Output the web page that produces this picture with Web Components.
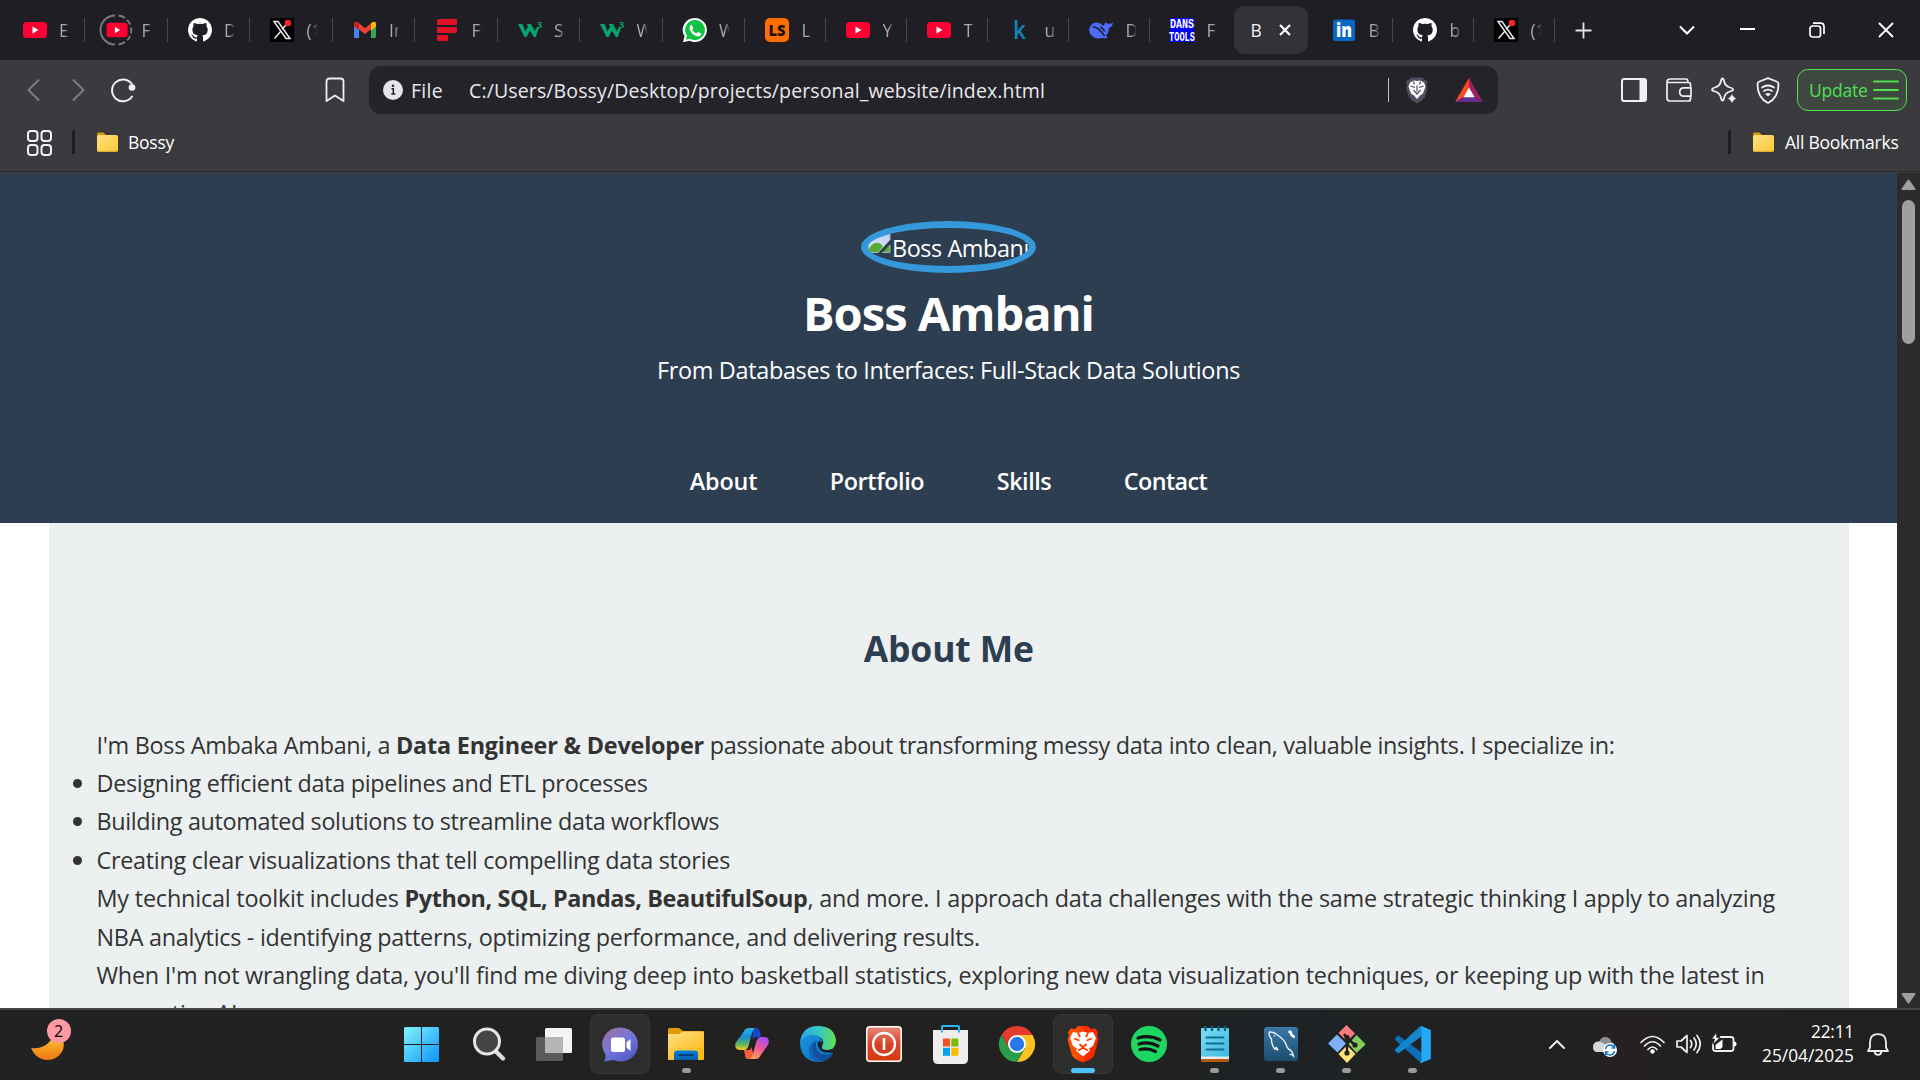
<!DOCTYPE html>
<html lang="en"><head><meta charset="utf-8"><title>Boss Ambani</title>
<style>
html,body{margin:0;width:1920px;height:1080px;overflow:hidden;background:#fff}
body{font-family:"Open Sans","Noto Sans","Liberation Sans",sans-serif}
</style></head><body>
<desktop-screen></desktop-screen>
<script>
const yt='<rect width="24" height="16" y="4" rx="3.500" fill="#ff0033"/><path d="M9.500 8.500v7l6-3.500z" fill="#fff"/>';
const gh='<path fill="#fff" d="M12 0A12 12 0 0 0 8.200 23.400c.6.100.8-.3.8-.6v-2.200c-3.300.7-4-1.400-4-1.400-.6-1.400-1.300-1.800-1.300-1.800-1.100-.7.100-.7.100-.7 1.200.1 1.800 1.200 1.800 1.200 1.100 1.800 2.800 1.300 3.500 1 .1-.8.4-1.300.8-1.600-2.700-.3-5.500-1.300-5.500-6 0-1.200.5-2.300 1.300-3.200-.2-.4-.6-1.600.1-3.200 0 0 1-.3 3.300 1.200a11.500 11.500 0 0 1 6 0C17.300 4.600 18.300 5 18.300 5c.7 1.600.2 2.800.1 3.200.8.900 1.300 2 1.300 3.200 0 4.700-2.800 5.700-5.500 6 .4.400.8 1.100.8 2.200v3.200c0 .3.2.7.8.6A12 12 0 0 0 12 0z"/>';
const xx='<rect width="24" height="24" fill="#000"/><path d="M4 3.500h4L20 20.500h-4zM19 3.500l-7 8M4.500 20.500l6.500-7.500" fill="none" stroke="#e8e8e8" stroke-width="1.500"/><circle cx="18" cy="5" r="3.300" fill="#f4212e"/>';
const w3='<path d="M0 6h4.500l3 7.500L10 8.500 8.800 6H13l4 7.500 1.500-4h2.500L17.800 19h-2L12 12.500 8.500 19h-2z" fill="#04a46a"/><text x="19" y="10" font-size="9" font-weight="700" fill="#04a46a">3</text>';
const folder='<path d="M1 2q0-1.500 1.500-1.500h5L10 3v16H1z" fill="#d99a12"/><rect x="1" y="3" width="21" height="17" rx="2" fill="url(#f)"/><path d="M1.500 19.300h20" stroke="#d9a733"/><defs><linearGradient id="f" x2="1" y2="1"><stop stop-color="#ffe082"/><stop offset="1" stop-color="#ffc933"/></linearGradient></defs>';
const S='fill="none" stroke="#f0f0f2" stroke-linecap="round" stroke-linejoin="round"';
const ICONS={
yt:[24,24,yt],
ytring:[24,24,'<g transform="translate(1.500 1.200) scale(.88 .9)">'+yt+'</g><path d="M10 -2.500A14.500 14.500 0 0 0 10 26.500M13.500 -2.500q3.500.3 6.500 2.500M22 2q2 2 3.200 4.500M26 9.500q.8 3 0 6M25.200 18q-1 2.500-3 4.300M20 24q-3 2.200-6.500 2.500" fill="none" stroke="#7b7b80" stroke-width="1.900"/>'],
gh:[24,24,gh],x:[24,24,xx],w3:[24,24,w3],
gmail:[24,24,'<path d="M1 6h5v14H2.500Q1 20 1 18.500z" fill="#4285f4"/><path d="M18 6h5v12.500q0 1.500-1.500 1.500H18z" fill="#34a853"/><path d="M1 5.500Q1 4 2.500 4L5 4.500l7 5.700 7-5.700v6L12 16 1 8z" fill="#ea4335"/><path d="M18 5.200Q23 2 23 6v2.500l-5 4z" fill="#fbbc04"/><path d="M1 6q0-2 2-2l3 2v6L1 8.500z" fill="#c5221f"/>'],
freq:[24,24,'<path d="M3.500 1H22v4.500q0 1.500-1.500 1.500h-17Q2 7 2 5.500V2.500Q2 1 3.500 1zM2 9h20v4.500q0 1.500-1.500 1.500h-17Q2 15 2 13.500zM2 17h11v4.500q0 1.500-1.500 1.500h-8Q2 23 2 21.500z" fill="#e01226"/>'],
wa:[24,24,'<path d="M12 0a12 12 0 1 1-5.500 22.700L0 24.300l1.500-6A12 12 0 0 1 12 0z" fill="#f4fff4"/><path d="M12 2a10 10 0 1 1-5 18.700L3 21.800l1-4A10 10 0 0 1 12 2z" fill="#10c344"/><path d="M8.500 6.500l1.800 3.800-1.200 1.500q1.500 2.700 4.300 3.800l1.500-1.700 3.300 1.600q.1 2.900-3.300 2.900Q8 17 6.500 10.500q0-2.800 2-4z" fill="#fff"/>'],
ls:[24,24,'<rect width="24" height="24" rx="5" fill="#ff6d00"/><text x="12" y="17.500" font-size="15" font-weight="800" text-anchor="middle" textLength="17" lengthAdjust="spacingAndGlyphs" fill="#1a1108">LS</text>'],
kg:[24,24,'<text x="5" y="21" font-size="26" font-weight="600" textLength="13" lengthAdjust="spacingAndGlyphs" fill="#0b87b8">k</text>'],
ds:[24,24,'<path d="M0 12Q1 5 7 4.500q4-.3 6.500 3Q16 8 16 4q2 2.500 4 1.500 2.500.5 4-1-.3 4-4 5.500 0 4.500-3 8 1 1.500 2.500 1-2.500 2-5.500 1Q2 22.500 0 12z" fill="#4d6bfe"/><path d="M3.500 9q4-.5 8 4t4 5M11 9.500q3 0 4.500 4" fill="none" stroke="#1f1e24" stroke-width="1.600"/>'],
dans:[24,24,'<rect width="24" height="24" fill="#0000f5"/><g font-family="Liberation Mono,monospace" font-size="12.500" font-weight="700" fill="#fff"><text x="0" y="9.500" textLength="24" lengthAdjust="spacingAndGlyphs">DANS</text><text x="-1" y="23" textLength="26" lengthAdjust="spacingAndGlyphs">TOOLS</text></g>'],
li:[24,24,'<rect x="1" y="1.500" width="22" height="21.500" rx="2" fill="#0a66c2"/><text x="12" y="19" font-size="19" font-weight="800" text-anchor="middle" textLength="16" lengthAdjust="spacingAndGlyphs" fill="#fff">in</text>'],
close:[14,14,'<path d="M2 2l10 10M12 2L2 12" stroke="#fff" stroke-width="2.200" fill="none"/>'],
plus:[17,17,'<path d="M8.500 .5v16M.5 8.500h16" stroke="#e4e4e6" stroke-width="1.800"/>'],
down:[16,10,'<path d="M1 1.500l7 7 7-7" stroke="#fff" stroke-width="2.100" fill="none"/>'],
min:[15,4,'<path d="M0 1h15" stroke="#fff" stroke-width="2"/>'],
restore:[16,16,'<rect x="1" y="4" width="10.500" height="11" rx="2.500" fill="none" stroke="#fff" stroke-width="1.700"/><path d="M4 1.200h7.500q3.500 0 3.500 3.500V12" fill="none" stroke="#fff" stroke-width="1.700"/>'],
wclose:[16,16,'<path d="M1 1l14 14M15 1L1 15" stroke="#fff" stroke-width="1.800"/>'],
back:[13,24,'<path d="M12 1.500L1.500 12 12 22.500" fill="none" stroke="#7f7e83" stroke-width="1.900"/>'],
fwd:[13,24,'<path d="M1 1.500L11.500 12 1 22.500" fill="none" stroke="#7f7e83" stroke-width="1.900"/>'],
reload:[26,24,'<path d="M21.800 6A10.900 10.900 0 1 0 22 18.500" fill="none" stroke="#f0f0f2" stroke-width="2" stroke-linecap="round"/><circle cx="22" cy="9.500" r="3.300" fill="#f0f0f2"/>'],
mark:[20,26,'<path d="M1.500 24V4.500q0-3 3-3h11q3 0 3 3V24L10 18.500z" '+S+' stroke-width="1.800"/>'],
info:[20,20,'<circle cx="10" cy="10" r="10" fill="#e6e5ea"/><path d="M8.500 8.700h1.800V14M8.300 14h4" fill="none" stroke="#242329" stroke-width="1.500"/><circle cx="10" cy="5.700" r="1.200" fill="#242329"/>'],
shield:[24,27,'<path d="M6 .5h11l3 2.500 2.500 1-1 4 1 3-2.500 9q-1 2-8 6.500-7-4.500-8-6.500L1 11l1-3L1 4l2.500-1z" fill="#4e4d61"/><path d="M5 5.500l4-2 3 .5 3-.5 4 2 1.500 4-2.500 7-3 2-3 3.500L9 18.500l-3-2-2.500-7z" fill="#fff"/><path d="M5.500 9l4.500 1.500M18.500 9L14 10.500M12 8.500v6M8.500 13l3.500 4 3.500-4M8.500 4.500l1 3M15.500 4.500l-1 3" fill="none" stroke="#4e4d61" stroke-width="1.200"/>'],
bat:[28,24,'<path d="M14 0L0 24l8.500-5L14 9.500z" fill="#ff4724"/><path d="M14 0l14 24-8.500-5L14 9.500z" fill="#9e1f63"/><path d="M0 24l8.500-5h11l8.500 5z" fill="#662d91"/><path d="M14 9.500L8.300 19.200h11.400z" fill="#fff"/>'],
side:[26,24,'<rect x="1" y="1" width="24" height="22" rx="2" '+S+' stroke-width="2"/><path d="M18.500 1H25v22h-6.500z" fill="#f0f0f2"/>'],
wallet:[26,24,'<path d="M24.500 10V6.500q0-2-2-2H1V20q0 3 3 3h18.500q2 0 2-2v-2.500M1 4.500q0-3.500 3-3.500h16q2 0 2 3.500" '+S+' stroke-width="1.700"/><path d="M25 9.800h-7q-4.300 0-4.300 4.200t4.300 4.200h7z" '+S+' stroke-width="1.700"/>'],
leo:[27,27,'<path d="M11.500 1.500q1 0 1.500 2.500 1 5 6 6.500 3 .8 3 2t-3 2q-5 1.500-6 6.500-.5 2.500-1.500 2.500T10 21q-1-5-6-6.500-3-.8-3-2t3-2Q9 9 10 4q.5-2.500 1.500-2.500z" '+S+' stroke-width="1.800"/><path d="M21 15q1 6 6 6.500-5 .5-6 6.500-1-6-6-6.500 5-.5 6-6.500z" fill="#f0f0f2" stroke="#3b3a3f"/>'],
vpn:[24,27,'<path d="M12 1.200l8.500 3.300q2 .8 2 2.500 0 14-10.500 19Q1.500 21 1.500 7q0-1.700 2-2.500z" '+S+' stroke-width="1.800"/><path d="M6 10.500q6-4 12 0M8 14q4-2.800 8 0" '+S+' stroke-width="1.800"/><path d="M9 17q3-2 6 0l-3 2.500z" fill="#f0f0f2"/>'],
burger:[26,20,'<path d="M1 1.500h24M1 10h24M1 18.500h24" stroke="#4fe04f" stroke-width="1.900" stroke-linecap="round"/>'],
apps:[25,26,'<g '+S+' stroke-width="2"><rect x="1" y="1" width="9.500" height="10" rx="3"/><rect x="14.500" y="1" width="9.500" height="10" rx="3"/><rect x="1" y="15" width="9.500" height="10" rx="3"/><rect x="14.500" y="15" width="9.500" height="10" rx="3"/></g>'],
folder:[23,21,folder],
broken:[24,20,'<defs><linearGradient id="g" x2="0" y2="1"><stop stop-color="#bcd0f5"/><stop offset="1" stop-color="#dfe9fa"/></linearGradient></defs><path d="M0 0h22v7L10 20H0z" fill="url(#g)"/><path d="M0 18q2-6 7-8 5-1 8 3.500L9.500 20H0z" fill="#55ad33"/><path d="M22 11.500V20h-8z" fill="#55ad33"/><path d="M.5 20V.5h21.500V7M0 19.500h10M22 12v7.500h-8" fill="none" stroke="#a9b2bd"/>'],
win:[35,35,'<defs><linearGradient id="g" x2="1" y2="1" gradientUnits="userSpaceOnUse" gradientTransform="scale(35)"><stop stop-color="#83f2ff"/><stop offset="1" stop-color="#0a96f8"/></linearGradient></defs><path d="M1.500 0H17v17H0V1.500Q0 0 1.500 0zM18 0h15.500Q35 0 35 1.500V17H18zM0 18h17v17H1.500Q0 35 0 33.500zM18 18h17v15.500q0 1.500-1.500 1.500H18z" fill="url(#g)"/>'],
search:[36,36,'<g transform="translate(1.500 0)"><path d="M24 25l7.500 7.500" stroke="#d9dcdf" stroke-width="4.400" stroke-linecap="round"/><circle cx="15.500" cy="15.500" r="12.500" fill="#454545" stroke="#e4e6e8" stroke-width="3"/></g>'],
task:[36,35,'<rect x="9" y="1" width="27" height="25" rx="1.500" fill="#f4f4f4"/><rect y="10" width="27" height="24" rx="1.500" fill="#5b5b5b"/><path d="M9 10h18v16H9z" fill="#b5b5b5"/>'],
chat:[35,35,'<defs><linearGradient id="g" x1=".1" x2=".8" y2="1"><stop stop-color="#a06fa5"/><stop offset=".5" stop-color="#7277d9"/><stop offset="1" stop-color="#5257c4"/></linearGradient></defs><path d="M18 .5a17 17 0 1 1-7 32.500L1 34.500q2-3 1.500-7A17 17 0 0 1 18 .5z" fill="url(#g)"/><rect x="8" y="10.500" width="14" height="14.500" rx="2.500" fill="#fff"/><path d="M23.500 15.500l4-3.500v12l-4-3.500z" fill="#fff"/>'],
explorer:[36,34,'<defs><linearGradient id="g" x2=".7" y2="1"><stop stop-color="#ffe083"/><stop offset="1" stop-color="#fdb914"/></linearGradient><linearGradient id="h" x2="0" y2="1"><stop stop-color="#0a80d8"/><stop offset="1" stop-color="#0560ac"/></linearGradient></defs><path d="M0 2.500Q0 1 1.500 1H11l4 3h19.500Q36 4 36 6v3H0z" fill="#e09b06"/><path d="M0 7h11l4-2.500h21V32q0 1-1 1H1q-1 0-1-1z" fill="url(#g)"/><path d="M6 33v-6.500q0-3 3-3h18q3 0 3 3V33z" fill="url(#h)"/><path d="M11 28h14" stroke="#063f7c" stroke-width="1.800" stroke-linecap="round"/>'],
copilot:[34,32,'<defs><linearGradient id="g" x2="0" y2="1"><stop stop-color="#2bb6f5"/><stop offset=".4" stop-color="#128ed2"/><stop offset=".75" stop-color="#63b75b"/><stop offset="1" stop-color="#ffcb1a"/></linearGradient><linearGradient id="h" x1=".6" x2=".3" y2="1"><stop stop-color="#a44df0"/><stop offset=".5" stop-color="#f0559b"/><stop offset="1" stop-color="#ffa05a"/></linearGradient></defs><path d="M18 0h3q3 0 4 4l1 5h-5q-2.500 0-3.500 3z" fill="#1746c9"/><path d="M8.500 4Q10 0 14 0h6q-2 1-3 5l-3 11.500Q12.500 22 9 22H5q-6 0-4.500-7z" fill="url(#g)"/><path d="M9 22h4q3 0 3.500-3l2 8q-1 4-2.500 4h-3q-3 0-3-4z" fill="#f4603a"/><path d="M25.500 27.500Q24 31 20 31h-5q2-1 3-5l3-11.500Q22.500 9 26 9h3q6 0 4.500 7z" fill="url(#h)"/>'],
edge:[36,36,'<defs><linearGradient id="g"><stop stop-color="#2aa9e6"/><stop offset=".55" stop-color="#36c8c0"/><stop offset="1" stop-color="#67e04d"/></linearGradient><linearGradient id="h" x2="1" y2="1"><stop stop-color="#1b94e0"/><stop offset="1" stop-color="#0b6cc4"/></linearGradient></defs><path d="M0 17Q1 8 10 8q9 0 12 7l-2 8 13 4.500Q28 36 18 36 1 35 0 17z" fill="url(#h)"/><path d="M0 16Q2 0 18 0t18 14q0 10-9 10-7 0-5-4 3-4-1-8-8-6-16-1-4 2-5 5z" fill="url(#g)"/><path d="M17 14q-5 4-4.500 10 1.500 9 10.500 11.300-3 1-6 .3-7-3-8-10.600Q9 17 17 14z" fill="#0f62b4"/><path d="M17 14q-5 4-4.500 10 1.500 9 10.500 11.300 7-2 10-7.800-1-.5-2 .2-7 2.800-12-1.200-5-5-2-12.500z" fill="#12509c"/><path d="M19.500 14.500q-3 3-1.300 6.500 2.300 5 8 5.500 2.800.2 5.800-1.500l1-2q-4 1.500-7.500 1-5-.7-3.500-4 .5-3-2.500-5.500z" fill="#1f2021"/>'],
power:[36,36,'<defs><linearGradient id="g" x2="0" y2="1"><stop stop-color="#e8897a"/><stop offset=".5" stop-color="#d8422a"/><stop offset="1" stop-color="#d63a10"/></linearGradient></defs><rect x=".8" y=".8" width="34.400" height="34.400" rx="3" fill="url(#g)" stroke="#fff" stroke-width="1.500"/><circle cx="18" cy="18" r="11" fill="none" stroke="#fff" stroke-width="2.300"/><path d="M18 12v12" stroke="#fff" stroke-width="2.600"/>'],
store:[35,39,'<path d="M0 5h35v29q0 5-5 5H5q-5 0-5-5z" fill="#eeeeef"/><path d="M9 7.500V2q0-1 1-1h15q1 0 1 1v5.500" fill="none" stroke="#29b6f2" stroke-width="2"/><path d="M10 13.500h7v8h-7z" fill="#f25022"/><path d="M18.300 13.500h7v8h-7z" fill="#7fba00"/><path d="M10 22.800h7v8h-7z" fill="#00a4ef"/><path d="M18.300 22.800h7v8h-7z" fill="#ffb900"/>'],
chrome:[36,36,'<path d="M18 18L2.400 9a18 18 0 0 1 31.200 0z" fill="#e33b2e"/><path d="M18 9h15.600A18 18 0 0 1 18 36l7.800-13.500z" fill="#fcc31e"/><path d="M2.400 9h31.200H18v9l-7.800 4.500z" fill="#e33b2e"/><path d="M2.400 9l7.800 13.500L18 27l7.800-4.500L18 36A18 18 0 0 1 2.400 9z" fill="#2b9e4b"/><circle cx="18" cy="18" r="9" fill="#fff"/><circle cx="18" cy="18" r="7.200" fill="#2878ea"/>'],
brave:[32,36,'<defs><linearGradient id="g"><stop offset=".3" stop-color="#ff5000"/><stop offset=".6" stop-color="#ff2a00"/></linearGradient></defs><path d="M8 3l3-3h10l3 3 4.500-.5 2.500 4-1 3 1.500 4-4.500 16q-1 2-4 4l-7 3-7-3q-3-2-4-4L.500 13.500l1.500-4-1-3 2.500-4z" fill="url(#g)"/><path d="M6 6l5 1 5-1.500L21 7l5-1 3 6-3 8-4 2.500 1 2-4 3.500-3 2.500-3-2.500-4-3.500 1-2L6 20l-3-8z" fill="#fff"/><path d="M7 12.500l5.500 2M25 12.500l-5.500 2M12.500 18l3.500 3.500 3.500-3.500M11 24.500l5-2.500 5 2.500M11 7l2 4M21 7l-2 4" fill="none" stroke="#ff3a00" stroke-width="1.800"/>'],
spot:[36,36,'<circle cx="18" cy="18" r="18" fill="#1ed760"/><path d="M7 12q12-3.500 22 2M8 18q10-2.800 19 2M9 23.500q8-2 15.500 2" fill="none" stroke="#141414" stroke-width="3.200" stroke-linecap="round"/>'],
note:[28,37,'<defs><linearGradient id="g" x2="1" y2="1"><stop stop-color="#7fdcf0"/><stop offset="1" stop-color="#3cb9e0"/></linearGradient></defs><path d="M0 30h28v4.500q0 1.500-1.500 1.500h-25Q0 36 0 34.500z" fill="#b55a0d"/><path d="M0 28h28v5H0z" fill="#e9e9e9"/><rect y="2" width="28" height="28.500" rx="1" fill="url(#g)"/><path d="M4.500 0v5M11 0v5M17.500 0v5M24 0v5" stroke="#0b6384" stroke-width="2.400"/><path d="M5.500 11.500h17M5.500 17.500h17M5.500 23.500h17" stroke="#0b6e92" stroke-width="2" stroke-linecap="round"/>'],
mysql:[34,34,'<defs><linearGradient id="g" x2="0" y2="1"><stop stop-color="#3a78a6"/><stop offset="1" stop-color="#1d4d6e"/></linearGradient></defs><rect width="34" height="34" rx="3" fill="url(#g)"/><path d="M14 23q-1-2-2-2.500L10.500 22Q7 16 7.500 12 4 8 5.500 5q4-.5 8 3 6 4 8 8 1 4 3 6 4 2 5 7-2-2-4-1.500M14 23q-2 0-3-2M10 8.500l1 .8" fill="none" stroke="#e6eff5" stroke-width="1.400"/><path d="M24.500 4.500l2 .5.800 2.500 3.200 3" stroke="#fff" stroke-width="2.600" fill="none"/>'],
git:[38,38,'<path d="M18.500 0L27 8.500 19 16.500 10.500 8z" fill="#fa7b7b"/><path d="M28.500 10L37 18.500Q38 19 37 20L28.500 28 20.500 19z" fill="#84cf5c"/><path d="M9 9.500l9 9-8.500 9L.5 19Q0 18.500.5 18z" fill="#7fb0ff"/><path d="M19 20.500l8.500 8.500-8.500 9-8.500-9z" fill="#ffe173"/><path d="M16 9l3 4v14M19 13l8 7" stroke="#231f1f" stroke-width="2.400" fill="none"/><circle cx="19" cy="12.500" r="2.600" fill="#231f1f"/><circle cx="27" cy="20" r="2.600" fill="#231f1f"/><circle cx="19" cy="28" r="2.600" fill="#231f1f"/>'],
code:[37,37,'<g transform="translate(.8 0)"><path d="M0 13.500q0-1 1-2l2.500-2L27 26.500V36q-2 0-3-1L1 14.500z" fill="#0b6fb5"/><path d="M27 0v10L3.500 27.500 1 25.500q-1.500-1-.5-2.500L24 1.500Q25 .5 27 0z" fill="#1287d0"/><path d="M26.500 0L36 4v29l-9.500 4q-1 0-2-1.500h2V1.500h-2z" fill="#27a8f3"/></g>'],
moon:[34,22,'<defs><linearGradient id="g" x2="0" y2="1"><stop stop-color="#f9b82b"/><stop offset="1" stop-color="#ee7712"/></linearGradient></defs><path d="M0 8q12 2 20-8h12q3 9-4 15.500-7 6-15.500 4T0 8z" fill="url(#g)"/>'],
up:[16,10,'<path d="M1 9l7-7 7 7" '+S+' stroke-width="1.900"/>'],
cloud:[25,21,'<path d="M7 6Q9 1 13 1q5 0 6.500 5 3 1 3 4H9z" fill="#8f8f90"/><path d="M1 11q0-5 5-5.500 4-.5 6 2.500 4 1 4 4l-2 4H4q-3-1-3-5z" fill="#d6d6d7"/><circle cx="18" cy="14" r="7" fill="#fff"/><path d="M13.500 13q1-4 4.500-4 3 0 4 2M22.500 15q-1 4-4.500 4-3 0-4-2M22.500 8.500V12h-3M13.500 19.500V16h3" stroke="#1376c8" stroke-width="1.500" fill="none"/>'],
wifi:[25,19,'<path d="M1 7.500q11.500-12 23 0M4.500 11q8-8.500 16 0M8 14.500q4.500-5 9 0" '+S+' stroke-width="1.700"/><circle cx="12.500" cy="16.500" r="2.200" fill="#fff"/>'],
vol:[25,20,'<path d="M1 7h4l6-5.500v17L5 13H1z" '+S+' stroke-width="1.700"/><path d="M14.500 6.500q2.500 3.500 0 7M18 4q4.500 6 0 12M21 1.500q6.500 8.500 0 17" '+S+' stroke-width="1.700"/>'],
batt:[25,20,'<path d="M8.500 4H19q2.500 0 2.500 2.500v9Q21.500 18 19 18H3.500Q1 18 1 15.500V11" '+S+' stroke-width="1.800"/><path d="M22 8.500q2.500 0 2.500 2.500T22 13.500z" fill="#fff"/><path d="M3.500 12l3-2.500 4-3V14l-2 2h-5z" fill="#fff"/><path d="M4.500-.5L-.500 6h3L1 11.500l7-7H4.800z" fill="#fff" stroke="#202020" stroke-width=".8"/>'],
bell:[22,23,'<path d="M3 14.500V9.500Q3 1.200 11 1.200t8 8.300v5l2 3.500H1z" '+S+' stroke-width="1.800"/><path d="M7.500 18.500q.5 3.300 3.500 3.300t3.500-3.300" '+S+' stroke-width="1.800"/>']
};
class Base extends HTMLElement{constructor(){super();this.attachShadow({mode:'open'})}
 connectedCallback(){if(!this.shadowRoot.firstChild)this.shadowRoot.innerHTML=this.view()}}
const def=(n,c)=>customElements.define(n,c);

/* An inline SVG glyph, sized from its registry entry. */
def('ui-icon',class extends Base{view(){const[w,h,m]=ICONS[this.getAttribute('n')];
 return `<style>:host{display:block;flex:none;width:${w}px;height:${h}px}svg{display:block;overflow:visible}</style><svg width="${w}" height="${h}" viewBox="0 0 ${w} ${h}">${m}</svg>`}});

/* A run of text whose tracking is adjusted to a given advance width. */
def('fit-text',class extends Base{view(){return '<style>:host{display:inline-block;white-space:pre;flex:none}</style><slot></slot>'}
 connectedCallback(){super.connectedCallback();const w=+this.getAttribute('w'),n=[...this.textContent].length;
  const now=this.getBoundingClientRect().width;this.style.letterSpacing=((w-now)/n).toFixed(4)+'px';this.style.width=w+'px'}});

def('browser-tab',class extends Base{view(){const i=this.getAttribute('icon');return `<style>
:host{display:flex;align-items:center;flex:none;box-sizing:border-box;height:60px;padding-left:20px}
b{font-weight:400;font-size:17.500px;line-height:24px;color:#a9a8ad;width:10px;margin-left:12.500px;overflow:hidden;white-space:nowrap;-webkit-mask:linear-gradient(90deg,#000 55%,#0003)}
i{margin-left:auto;width:1px;height:24px;background:#48474c}
:host([last]) i{display:none}</style><ui-icon n="${i}"></ui-icon><b><slot></slot></b><i></i>`}});

def('tab-strip',class extends Base{view(){
 const a=[['yt','E'],['ytring','Fi'],['gh','D'],['x','(1'],['gmail','In'],['freq','Fo'],['w3','S'],['w3','W'],['wa','W'],['ls','L'],['yt','Y'],['yt','T'],['kg','u'],['ds','D'],['dans','F']];
 const ws=i=>i<9?82.5:i<14?81:83.5;
 return `<style>:host{display:flex;align-items:center;height:60px;background:#1f1e24;padding-left:2.500px}
.act{display:flex;align-items:center;box-sizing:border-box;width:74.500px;height:48px;border-radius:11px;background:#333237;padding-left:17px;margin-right:4px;color:#f1f1f3;font-size:17.500px;flex:none}
.act b{font-weight:400;width:10px;overflow:hidden;line-height:24px}.act ui-icon{margin-left:17px}
.plus{margin-left:19.500px}.sys{display:flex;margin-left:auto;height:60px}.sys div{width:69px;display:flex;align-items:center;justify-content:center}.sys div:first-child{width:52px;padding-left:2px}</style>
${a.map((t,i)=>`<browser-tab icon="${t[0]}" style="width:${ws(i)}px" ${i==14?'last':''}>${t[1]}</browser-tab>`).join('')}
<div class="act"><b>B</b><ui-icon n="close"></ui-icon></div>
<browser-tab icon="li" style="width:81px">B</browser-tab><browser-tab icon="gh" style="width:81px">b</browser-tab><browser-tab icon="x" style="width:81px">(1</browser-tab>
<ui-icon class="plus" n="plus"></ui-icon>
<div class="sys"><div><ui-icon n="down"></ui-icon></div><div><ui-icon n="min"></ui-icon></div><div><ui-icon n="restore"></ui-icon></div><div><ui-icon n="wclose"></ui-icon></div></div>`}});

def('tool-bar',class extends Base{view(){return `<style>
:host{display:flex;flex-direction:column;height:113px;box-sizing:border-box;background:linear-gradient(#2b2a2e,#2b2a2e) 0 111px/100% 1px no-repeat #3b3a3f}
.row{display:flex;align-items:center;height:60px}
.url{display:flex;align-items:center;box-sizing:border-box;width:1129px;height:48px;border-radius:12px;background:#242329;margin-left:24px;padding-left:14px;font-size:19.500px;color:#e9e9ec;line-height:28px}
.url fit-text{margin-top:1px}.url i{width:1px;height:24px;background:#c4c4c8}
.up{display:flex;align-items:center;box-sizing:border-box;width:110px;height:42px;border:1.500px solid #4fe04f;border-radius:11px;background:#3e4740;color:#4fe04f;font-size:17.500px;padding-left:11px;margin-left:17px}
.bm{height:44px;font-size:17.500px;color:#fff}.bm>i{width:3px;height:24px;background:#1f1e24;border-radius:1px}</style>
<div class="row"><ui-icon n="back" style="margin-left:27px"></ui-icon><ui-icon n="fwd" style="margin-left:32px"></ui-icon><ui-icon n="reload" style="margin-left:25px"></ui-icon><ui-icon n="mark" style="margin-left:189px"></ui-icon>
<div class="url"><ui-icon n="info"></ui-icon><fit-text w="32" style="margin-left:8px">File</fit-text><fit-text w="576" style="margin-left:26px">C:/Users/Bossy/Desktop/projects/personal_website/index.html</fit-text><i style="margin-left:343px"></i><ui-icon n="shield" style="margin-left:16px"></ui-icon><ui-icon n="bat" style="margin-left:26px"></ui-icon></div>
<ui-icon n="side" style="margin-left:123px"></ui-icon><ui-icon n="wallet" style="margin-left:19px"></ui-icon><ui-icon n="leo" style="margin-left:19px"></ui-icon><ui-icon n="vpn" style="margin-left:18px"></ui-icon>
<div class="up"><fit-text w="58.500">Update</fit-text><ui-icon n="burger" style="margin-left:5px"></ui-icon></div></div>
<div class="row bm"><ui-icon n="apps" style="margin:1px 0 0 26.500px"></ui-icon><i style="margin-left:20.500px"></i><ui-icon n="folder" style="margin-left:21px"></ui-icon><fit-text w="46" style="margin-left:9px">Bossy</fit-text>
<i style="margin-left:auto"></i><ui-icon n="folder" style="margin-left:21px"></ui-icon><fit-text w="113.500" style="margin:0 21.500px 0 10px">All Bookmarks</fit-text></div>`}});

def('site-header',class extends Base{view(){return `<style>
:host{display:flex;flex-direction:column;align-items:center;height:350px;box-sizing:border-box;padding-top:48px;background:#2c3e50;color:#fff;font-size:23.400px}
.av{display:flex;align-items:center;box-sizing:border-box;width:175px;height:52px;border:7.500px solid #3498db;border-radius:50%;overflow:hidden}
.av ui-icon{align-self:flex-start;margin-top:5px}.av fit-text{line-height:36px;margin-top:2px}
h1{margin:9px 0 0;font-size:47px;line-height:62px;font-weight:700}
p{margin:7px 0 0;line-height:38px}
nav{display:flex;gap:72.500px;margin-top:73px;line-height:38px;font-weight:600}</style>
<div class="av"><ui-icon n="broken"></ui-icon><fit-text w="137">Boss Ambani</fit-text></div>
<h1><fit-text w="291">Boss Ambani</fit-text></h1>
<p><fit-text w="583">From Databases to Interfaces: Full-Stack Data Solutions</fit-text></p>
<nav><fit-text w="67.500">About</fit-text><fit-text w="94.500">Portfolio</fit-text><fit-text w="54.500">Skills</fit-text><fit-text w="83.500">Contact</fit-text></nav>`}});

def('about-section',class extends Base{view(){return `<style>
:host{display:block;box-sizing:border-box;width:1800px;height:485px;margin-left:49px;overflow:hidden;background:#ecf0f1;padding:97px 0 0 47.500px;color:#333;font-size:23.400px;line-height:38.400px}
h2{margin:0 48px 48px 0;font-size:35.500px;line-height:57.600px;text-align:center;color:#2c3e50;font-weight:700}
p,ul{margin:0;padding:0;list-style:none}p,li{display:flex;height:38.400px}b{font-weight:700}
li::before{content:"";flex:none;width:9px;height:9px;border-radius:50%;background:#333;margin:15px 15px 0 -24px}</style>
<h2><fit-text w="170">About Me</fit-text></h2>
<p><fit-text w="299.500">I'm Boss Ambaka Ambani, a </fit-text><b><fit-text w="308">Data Engineer &amp; Developer</fit-text></b><fit-text w="910.500"> passionate about transforming messy data into clean, valuable insights. I specialize in:</fit-text></p>
<ul><li><fit-text w="551">Designing efficient data pipelines and ETL processes</fit-text></li><li><fit-text w="622.500">Building automated solutions to streamline data workflows</fit-text></li><li><fit-text w="633.500">Creating clear visualizations that tell compelling data stories</fit-text></li></ul>
<p><fit-text w="308">My technical toolkit includes </fit-text><b><fit-text w="403">Python, SQL, Pandas, BeautifulSoup</fit-text></b><fit-text w="967.500">, and more. I approach data challenges with the same strategic thinking I apply to analyzing</fit-text></p>
<p><fit-text w="883.500">NBA analytics - identifying patterns, optimizing performance, and delivering results.</fit-text></p>
<p><fit-text w="1668">When I'm not wrangling data, you'll find me diving deep into basketball statistics, exploring new data visualization techniques, or keeping up with the latest in</fit-text></p>
<p><fit-text w="147">generative AI.</fit-text></p>`}});

def('scroll-bar',class extends Base{view(){return `<style>
:host{display:flex;flex-direction:column;align-items:center;width:23px;height:835px;background:#2c2c2c;box-sizing:border-box;padding:6px 0 4px}
svg{display:block}div{width:13px;height:144px;border-radius:7px;background:#9f9f9f;margin:10px 0 auto}</style>
<svg width="15" height="11"><path d="M7.500 1.500L13.500 10h-12z" fill="#9f9f9f" stroke="#9f9f9f" stroke-width="2" stroke-linejoin="round"/></svg><div></div>
<svg width="15" height="12"><path d="M7.500 10.500L13.500 2h-12z" fill="#9f9f9f" stroke="#9f9f9f" stroke-width="2" stroke-linejoin="round"/></svg>`}});

def('task-item',class extends Base{view(){return `<style>
:host{display:flex;flex:none;justify-content:center;width:66.050px}
:host([first]){width:66px;margin-right:1.200px}
div{display:flex;flex-direction:column;align-items:center;box-sizing:border-box;width:60px;height:60px;border:1px solid transparent;border-radius:8px}
:host([tile]) div{background:#2d2d2d;border-color:#383838}
span{display:flex;align-items:center;height:54px;margin-top:2px}
u{width:9px;height:5px;border-radius:3px;background:#9a9a9a;margin-top:-3px;visibility:hidden;flex:none}
:host([run]) u{visibility:visible}:host([active]) u{visibility:visible;width:24px;background:#4cc2ff}</style><div><span><ui-icon n="${this.getAttribute('icon')}"></ui-icon></span><u></u></div>`}});

def('task-bar',class extends Base{view(){
 const a=['win first','search','task','chat tile','explorer run','copilot','edge','power','store','chrome','brave tile active','spot','note run','mysql run','git run','code run'];
 return `<style>:host{display:flex;height:72px;box-sizing:border-box;border-top:2px solid #444545;background:linear-gradient(90deg,#222224,#202122 8%,#212121 25%,#232120 32%,#212121 58%,#1e2224 66%,#212122 78%,#242120 84%,#202021);padding-top:4px;color:#fff}
.w{position:relative;width:388px;flex:none}.w ui-icon{margin:26px 0 0 31px}
.w b{position:absolute;left:46.500px;top:4.500px;width:24px;height:24px;border-radius:50%;background:#ff99a4;color:#000;font-weight:400;font-size:16px;line-height:24px;text-align:center}
.tray{display:flex;height:60px;align-items:center;margin-left:auto;padding-right:31px}
time{display:flex;flex-direction:column;align-items:flex-end;font-size:17.300px;line-height:24px;margin:0 13px 0 24px}</style>
<div class="w"><ui-icon n="moon"></ui-icon><b>2</b></div>
${a.map(s=>{const[n,...r]=s.split(' ');return `<task-item icon="${n}" ${r.join(' ')}></task-item>`}).join('')}
<div class="tray"><ui-icon n="up"></ui-icon><ui-icon n="cloud" style="margin:4px 1px 0 27px"></ui-icon><ui-icon n="wifi" style="margin-left:22px"></ui-icon><ui-icon n="vol" style="margin-left:11px"></ui-icon><ui-icon n="batt" style="margin:-2px 1px 0 11px"></ui-icon>
<time><fit-text w="43">22:11</fit-text><fit-text w="92">25/04/2025</fit-text></time><ui-icon n="bell"></ui-icon></div>`}});

def('desktop-screen',class extends Base{view(){return `<style>
:host{display:flex;flex-direction:column;width:1920px;height:1080px;overflow:hidden}
.page{display:flex;height:835px;background:#fff}.doc{width:1897px;overflow:hidden}</style>
<tab-strip></tab-strip><tool-bar></tool-bar><div class="page"><div class="doc"><site-header></site-header><about-section></about-section></div><scroll-bar></scroll-bar></div><task-bar></task-bar>`}});
</script></body></html>
